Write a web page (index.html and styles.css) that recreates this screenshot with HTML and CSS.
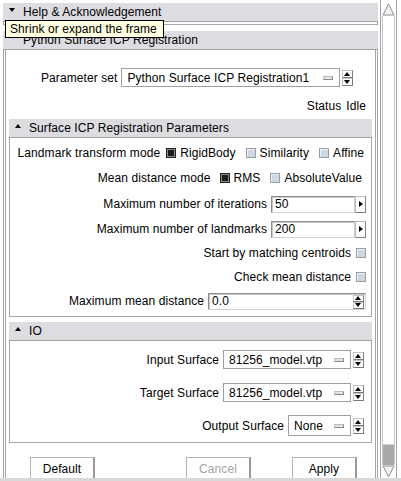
FILE: index.html
```html
<!DOCTYPE html>
<html lang="en">
<head>
    <meta charset="UTF-8">
    <title>Python Surface ICP Registration</title>
    <link rel="stylesheet" href="styles.css">
</head>
<body>
<div class="window">
    <div class="pane">
        <div class="frame">
            <div class="frame-head"><span class="tri down"></span>Help &amp; Acknowledgement</div>
            <div class="frame-stub"></div>
        </div>
        <div class="frame module">
            <div class="frame-head">Python Surface ICP Registration</div>
            <div class="module-body">
                <div class="preset">
                    <span class="label">Parameter set</span>
                    <div class="menu wide"><span>Python Surface ICP Registration1</span><i class="ind"></i></div>
                    <div class="spin"><b class="up"></b><b class="dn"></b></div>
                </div>
                <div class="status"><span>Status</span><span>Idle</span></div>

                <div class="frame sub">
                    <div class="frame-head"><span class="tri up"></span>Surface ICP Registration Parameters</div>
                    <div class="sub-body params">
                        <div class="row">
                            <span class="label">Landmark transform mode</span>
                            <div class="opts first">
                                <span class="opt"><i class="cb on"></i>RigidBody</span>
                                <span class="opt"><i class="cb"></i>Similarity</span>
                                <span class="opt"><i class="cb"></i>Affine</span>
                            </div>
                        </div>
                        <div class="row tall">
                            <span class="label">Mean distance mode</span>
                            <div class="opts second">
                                <span class="opt"><i class="cb on"></i>RMS</span>
                                <span class="opt"><i class="cb"></i>AbsoluteValue</span>
                            </div>
                        </div>
                        <div class="row tall">
                            <span class="label">Maximum number of iterations</span>
                            <div class="entry num">50</div>
                            <div class="arrow-btn"><b></b></div>
                        </div>
                        <div class="row">
                            <span class="label">Maximum number of landmarks</span>
                            <div class="entry num">200</div>
                            <div class="arrow-btn"><b></b></div>
                        </div>
                        <div class="row">
                            <span class="label">Start by matching centroids</span>
                            <i class="cb"></i>
                        </div>
                        <div class="row">
                            <span class="label">Check mean distance</span>
                            <i class="cb"></i>
                        </div>
                        <div class="row">
                            <span class="label">Maximum mean distance</span>
                            <div class="entry long">0.0<div class="spin inner"><b class="up"></b><b class="dn"></b></div></div>
                        </div>
                    </div>
                </div>

                <div class="frame sub io">
                    <div class="frame-head"><span class="tri up"></span>IO</div>
                    <div class="sub-body">
                        <div class="row io-row">
                            <span class="label">Input Surface</span>
                            <div class="menu mid"><span>81256_model.vtp</span><i class="ind"></i></div>
                            <div class="spin"><b class="up"></b><b class="dn"></b></div>
                        </div>
                        <div class="row io-row">
                            <span class="label">Target Surface</span>
                            <div class="menu mid"><span>81256_model.vtp</span><i class="ind"></i></div>
                            <div class="spin"><b class="up"></b><b class="dn"></b></div>
                        </div>
                        <div class="row io-row">
                            <span class="label">Output Surface</span>
                            <div class="menu short"><span>None</span><i class="ind"></i></div>
                            <div class="spin"><b class="up"></b><b class="dn"></b></div>
                        </div>
                    </div>
                </div>

                <div class="buttons">
                    <div class="btn default">Default</div>
                    <div class="btn cancel disabled">Cancel</div>
                    <div class="btn apply">Apply</div>
                </div>
            </div>
        </div>
    </div>
    <div class="scrollbar">
        <svg class="sb-arrow" width="13" height="13" viewBox="0 0 13 13"><polygon points="6.5,1 12,12 1,12" fill="#f2f2f2" stroke="#8c8c8c"/></svg>
        <div class="trough"><div class="thumb"></div></div>
        <svg class="sb-arrow" width="13" height="13" viewBox="0 0 13 13"><polygon points="1,1 12,1 6.5,12" fill="#f2f2f2" stroke="#8c8c8c"/></svg>
    </div>
</div>
<div class="bottom-strip"></div>
<div class="tooltip">Shrink or expand the frame</div>
</body>
</html>
```

FILE: styles.css
```css
html, body{
    margin: 0;
}
body{
    width: 401px;
    height: 481px;
    overflow: hidden;
    position: relative;
    background-color: #fff;
    font-family: "Liberation Sans", Arial, sans-serif;
    font-size: 12px;
    letter-spacing: 0.08px;
    color: #000;
}
.window{
    display: flex;
    height: 478px;
    overflow: hidden;
}
.pane{
    width: 375px;
    padding: 3px 0 0 3px;
}
.bottom-strip{
    height: 3px;
    background-color: #d9d9d9;
}

/* collapsible frames */
.frame-head{
    height: 18px;
    display: flex;
    align-items: center;
    padding-left: 20px;
    background-color: #dddce1;
    border-bottom: 1px solid #a3a3a3;
    white-space: nowrap;
}
.frame-head .tri{
    width: 0;
    height: 0;
    border-left: 3px solid transparent;
    border-right: 3px solid transparent;
    margin: -4px 8px 0 -14px;
}
.tri.down{
    border-top: 4px solid #000;
}
.tri.up{
    border-bottom: 4px solid #000;
}
.frame-stub{
    height: 2px;
    border: 1px solid #a8a8a8;
    border-top: none;
}
.module{
    margin-top: 6px;
}
.module-body{
    height: 440px;
    border-left: 3px double #a6a6a6;
    border-right: 3px double #a6a6a6;
    padding: 0 3px;
}
.sub .frame-head{
    padding-left: 20px;
}
.sub-body{
    border: 1px solid #a6a6a6;
    border-top: none;
    padding: 3px 5px 3px 0;
}
.sub{
    margin-top: 6px;
}
.io{
    margin-top: 5px;
}
.io .sub-body{
    padding: 2px 7px 0 0;
}

/* rows */
.preset{
    display: flex;
    align-items: center;
    padding: 18px 0 0 32px;
}
.preset .label{
    margin-right: 4px;
}
.status{
    display: flex;
    justify-content: flex-end;
    gap: 5px;
    padding-right: 6px;
    margin-top: 12px;
    line-height: 14px;
}
.row{
    height: 24px;
    display: flex;
    align-items: center;
    justify-content: flex-end;
    white-space: nowrap;
}
.row.tall{
    height: 26px;
}
.row .label{
    margin-right: 4px;
}
.io-row{
    height: 33px;
}
.opts{
    display: flex;
    gap: 10px;
    margin-left: 2px;
}
.opts.first{
    margin-right: 2px;
}
.opts.second{
    margin-left: 5px;
    margin-right: 4px;
}
.opt{
    display: flex;
    align-items: center;
}
.opt .cb{
    margin-right: 4px;
}
.cb{
    display: inline-block;
    width: 8px;
    height: 8px;
    border: 1px solid #9c9c9c;
    background-color: #ccd6e4;
    box-shadow: inset 1px 1px 0 #eef2f8;
}
.cb.on{
    border-color: #222;
    background-color: #1c1c1c;
    box-shadow: inset 0 0 0 1px #8a8a8a;
}
.row > .cb{
    margin-left: 1px;
}

/* inputs */
.entry{
    height: 15px;
    line-height: 15px;
    padding-left: 3px;
    border-top: 1px solid #8e8e8e;
    border-left: 1px solid #8e8e8e;
    border-bottom: 1px solid #d2d2d2;
    border-right: 1px solid #d2d2d2;
    background-color: #fff;
    position: relative;
}
.entry.num{
    width: 79px;
    box-shadow: inset 1px 1px 0 #c8c8c8;
}
.entry.long{
    width: 153px;
    box-shadow: inset 1px 1px 0 #c8c8c8;
}
.arrow-btn{
    width: 9px;
    height: 15px;
    border: 1px solid #b8b8b8;
    border-right-color: #808080;
    border-bottom-color: #808080;
    display: flex;
    align-items: center;
    justify-content: center;
}
.arrow-btn b{
    width: 0;
    height: 0;
    border-top: 3px solid transparent;
    border-bottom: 3px solid transparent;
    border-left: 4px solid #000;
}
.menu{
    height: 17px;
    display: flex;
    align-items: center;
    justify-content: space-between;
    padding: 0 6px 0 5px;
    border: 1px solid #a0a0a0;
    background-color: #fff;
}
.menu.wide{
    width: 206px;
}
.menu.mid{
    width: 115px;
}
.menu.short{
    width: 50px;
    height: 19px;
}
.ind{
    width: 8px;
    height: 2px;
    border: 1px solid #bdbdbd;
    border-bottom-color: #8a8a8a;
    border-right-color: #8a8a8a;
    background-color: #e4e4e4;
}
.spin{
    display: flex;
    flex-direction: column;
    margin-left: 2px;
}
.spin b{
    width: 9px;
    height: 6px;
    border: 1px solid #c4c4c4;
    border-right-color: #7a7a7a;
    border-bottom-color: #7a7a7a;
    position: relative;
}
.spin b::after{
    content: "";
    position: absolute;
    left: 1px;
    width: 0;
    height: 0;
    border-left: 3.5px solid transparent;
    border-right: 3.5px solid transparent;
}
.spin b.up::after{
    top: 1px;
    border-bottom: 4px solid #000;
}
.spin b.dn::after{
    top: 1px;
    border-top: 4px solid #000;
}
.spin.inner{
    position: absolute;
    right: 1px;
    top: 1px;
}
.spin.inner b{
    height: 5px;
}
.spin.inner b::after{
    top: 0;
}

/* buttons */
.buttons{
    display: flex;
    margin-top: 14px;
}
.btn{
    width: 62px;
    height: 20px;
    line-height: 22px;
    text-align: center;
    border: 1px solid #b4b4b4;
    border-right: 2px solid #9a9a9a;
    border-bottom: 2px solid #9a9a9a;
}
.default{
    margin-left: 21px;
}
.cancel{
    margin-left: 91px;
}
.apply{
    margin-left: 41px;
}
.disabled{
    color: #a3a3a3;
}

/* scrollbar */
.scrollbar{
    width: 17px;
    margin-left: 2px;
    box-sizing: border-box;
    border-left: 1px solid #a4a4a4;
    border-right: 1px solid #a4a4a4;
    padding: 3px 1px 0;
    display: flex;
    flex-direction: column;
}
.sb-arrow{
    display: block;
    flex: none;
}
.trough{
    flex: 1;
    border-left: 1px solid #c6c6c6;
    border-right: 1px solid #c6c6c6;
    display: flex;
    flex-direction: column;
    justify-content: flex-end;
}
.thumb{
    height: 20px;
    background-color: #a8a8a8;
    border-top: 1px solid #d0d0d0;
}

.tooltip{
    position: absolute;
    left: 5px;
    top: 20px;
    width: 153px;
    height: 16px;
    line-height: 16px;
    padding-left: 4px;
    border: 1px solid #000;
    background-color: #ffffe1;
    white-space: nowrap;
}
```
